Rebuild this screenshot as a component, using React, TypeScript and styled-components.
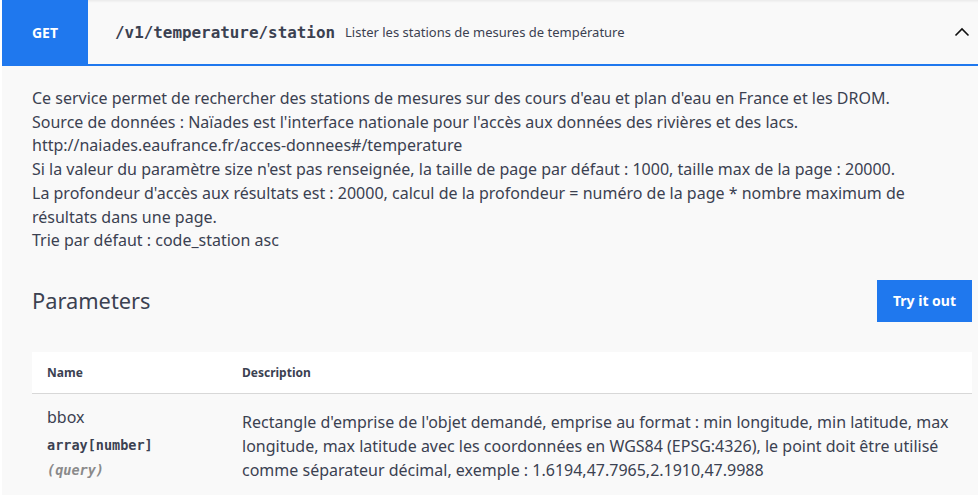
import React from "react";
import styled, { createGlobalStyle } from "styled-components";

const Global = createGlobalStyle`
  html, body { margin: 0; padding: 0; background: #ffffff; }
  body { font-family: "Noto Sans", "Open Sans", sans-serif; color: #3b4151; }
  * { box-sizing: border-box; }
`;

const BLUE = "#1f78ee";

const OpBlock = styled.section`
  margin-left: 2px;
  background: #f9f9f9;
  min-height: 495px;
`;

const Summary = styled.header`
  display: flex;
  align-items: center;
  height: 66px;
  border-bottom: 2px solid ${BLUE};
  box-shadow: inset 0 3px 3px -2px rgba(0, 0, 0, 0.08);
`;

const Method = styled.span`
  display: flex;
  align-items: center;
  justify-content: center;
  width: 86px;
  height: 64px;
  align-self: flex-start;
  background: ${BLUE};
  color: #ffffff;
  font-weight: 700;
  font-size: 14px;
`;

const Path = styled.span`
  margin-left: 27px;
  font-family: "DejaVu Sans Mono", monospace;
  font-weight: 700;
  font-size: 15.9px;
  color: #3b4151;
`;

const Desc = styled.span`
  margin-left: 10px;
  font-size: 13px;
  color: #3b4151;
`;

const Chevron = styled.svg`
  margin-left: auto;
  margin-right: 6px;
  width: 20px;
  height: 20px;
`;

const Body = styled.div`
  padding: 21px 6px 0 30px;
`;

const Markdown = styled.div`
  font-size: 16px;
  line-height: 23.7px;
  color: #3b4151;
  padding-right: 20px;
  p { margin: 0; }
`;

const SectionHeader = styled.div`
  display: flex;
  align-items: center;
  justify-content: space-between;
  margin-top: 26px;
  height: 44px;
`;

const Title = styled.h4`
  margin: 0;
  font-size: 21.8px;
  font-weight: 400;
  color: #3b4151;
`;

const TryButton = styled.button`
  width: 95px;
  height: 42px;
  border: none;
  background: ${BLUE};
  color: #ffffff;
  font-family: "Noto Sans", sans-serif;
  font-weight: 700;
  font-size: 14px;
  cursor: pointer;
`;

const Table = styled.table`
  margin-top: 29px;
  width: 100%;
  border-collapse: collapse;
`;

const Th = styled.th<{ $w?: number }>`
  background: #ffffff;
  height: 42px;
  padding: 0 15px;
  text-align: left;
  font-size: 12px;
  font-weight: 700;
  color: #3b4151;
  border-bottom: 1px solid #d8d8d8;
  width: ${(p) => (p.$w ? `${p.$w}px` : "auto")};
`;

const Td = styled.td<{ $pt: number }>`
  padding: ${(p) => p.$pt}px 15px 0 15px;
  vertical-align: top;
`;

const ParamName = styled.div`
  font-size: 16px;
  line-height: 22px;
  color: #3b4151;
`;

const ParamType = styled.div`
  margin-top: 8px;
  font-family: "DejaVu Sans Mono", monospace;
  font-weight: 700;
  font-size: 13.5px;
  line-height: 18px;
  color: #3b4151;
`;

const ParamIn = styled.div`
  margin-top: 7px;
  font-family: "DejaVu Sans Mono", monospace;
  font-style: italic;
  font-weight: 700;
  font-size: 13.5px;
  line-height: 18px;
  color: #8a8a8a;
`;

const ParamDesc = styled.div`
  font-size: 16px;
  line-height: 24px;
  color: #3b4151;
`;

export default function App() {
  return (
    <>
      <Global />
      <OpBlock>
        <Summary>
          <Method>GET</Method>
          <Path>/v1/temperature/station</Path>
          <Desc>Lister les stations de mesures de température</Desc>
          <Chevron viewBox="0 0 20 20">
            <polyline points="3.5,13.5 10,7 16.5,13.5" fill="none" stroke="#111" strokeWidth="1.6" />
          </Chevron>
        </Summary>
        <Body>
          <Markdown>
            <p>Ce service permet de rechercher des stations de mesures sur des cours d'eau et plan d'eau en France et les DROM.</p>
            <p>Source de données : Naïades est l'interface nationale pour l'accès aux données des rivières et des lacs.</p>
            <p>http://naiades.eaufrance.fr/acces-donnees#/temperature</p>
            <p>Si la valeur du paramètre size n'est pas renseignée, la taille de page par défaut : 1000, taille max de la page : 20000.</p>
            <p>La profondeur d'accès aux résultats est : 20000, calcul de la profondeur = numéro de la page * nombre maximum de résultats dans une page.</p>
            <p>Trie par défaut : code_station asc</p>
          </Markdown>
          <SectionHeader>
            <Title>Parameters</Title>
            <TryButton>Try it out</TryButton>
          </SectionHeader>
          <Table>
            <thead>
              <tr>
                <Th $w={195}>Name</Th>
                <Th>Description</Th>
              </tr>
            </thead>
            <tbody>
              <tr>
                <Td $pt={12}>
                  <ParamName>bbox</ParamName>
                  <ParamType>array[number]</ParamType>
                  <ParamIn>(query)</ParamIn>
                </Td>
                <Td $pt={16}>
                  <ParamDesc>
                    Rectangle d'emprise de l'objet demandé, emprise au format : min longitude, min latitude, max longitude, max latitude avec les coordonnées en WGS84 (EPSG:4326), le point doit être utilisé comme séparateur décimal, exemple : 1.6194,47.7965,2.1910,47.9988
                  </ParamDesc>
                </Td>
              </tr>
            </tbody>
          </Table>
        </Body>
      </OpBlock>
    </>
  );
}
